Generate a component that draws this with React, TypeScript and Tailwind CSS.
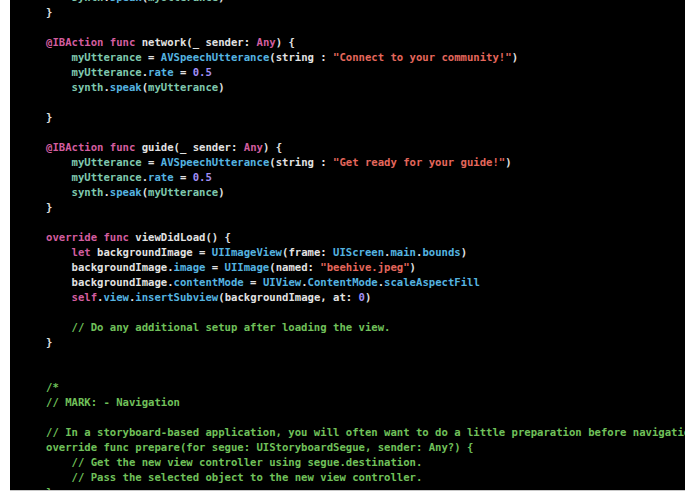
import React from "react";

type Seg = [string, string];

// token colours, Xcode dark theme as seen in the screenshot
const col: Record<string, string> = {
  p: "text-[#e2e2e2]",
  k: "text-[#d35d9f]",
  t: "text-[#7fc8ae]",
  b: "text-[#55b4e0]",
  n: "text-[#a28ff5]",
  s: "text-[#e4675c]",
  g: "text-[#70c05a]",
};

const I = "    ";

const lines: Seg[][] = [
  [[I, "p"], ["synth", "t"], [".", "p"], ["speak", "b"], ["(", "p"], ["myUtterance", "t"], [")", "p"]],
  [["}", "p"]],
  [],
  [["@IBAction", "k"], [" ", "p"], ["func", "k"], [" network(_ sender: ", "p"], ["Any", "k"], [") {", "p"]],
  [[I, "p"], ["myUtterance", "t"], [" = ", "p"], ["AVSpeechUtterance", "b"], ["(string : ", "p"], ['"Connect to your community!"', "s"], [")", "p"]],
  [[I, "p"], ["myUtterance", "t"], [".", "p"], ["rate", "b"], [" = ", "p"], ["0.5", "n"]],
  [[I, "p"], ["synth", "t"], [".", "p"], ["speak", "b"], ["(", "p"], ["myUtterance", "t"], [")", "p"]],
  [],
  [["}", "p"]],
  [],
  [["@IBAction", "k"], [" ", "p"], ["func", "k"], [" guide(_ sender: ", "p"], ["Any", "k"], [") {", "p"]],
  [[I, "p"], ["myUtterance", "t"], [" = ", "p"], ["AVSpeechUtterance", "b"], ["(string : ", "p"], ['"Get ready for your guide!"', "s"], [")", "p"]],
  [[I, "p"], ["myUtterance", "t"], [".", "p"], ["rate", "b"], [" = ", "p"], ["0.5", "n"]],
  [[I, "p"], ["synth", "t"], [".", "p"], ["speak", "b"], ["(", "p"], ["myUtterance", "t"], [")", "p"]],
  [["}", "p"]],
  [],
  [["override", "k"], [" ", "p"], ["func", "k"], [" viewDidLoad() {", "p"]],
  [[I, "p"], ["let", "k"], [" backgroundImage = ", "p"], ["UIImageView", "b"], ["(frame: ", "p"], ["UIScreen", "b"], [".", "p"], ["main", "b"], [".", "p"], ["bounds", "b"], [")", "p"]],
  [[I + "backgroundImage.", "p"], ["image", "b"], [" = ", "p"], ["UIImage", "b"], ["(named: ", "p"], ['"beehive.jpeg"', "s"], [")", "p"]],
  [[I + "backgroundImage.", "p"], ["contentMode", "b"], [" = ", "p"], ["UIView", "b"], [".", "p"], ["ContentMode", "b"], [".", "p"], ["scaleAspectFill", "b"]],
  [[I, "p"], ["self", "k"], [".", "p"], ["view", "b"], [".", "p"], ["insertSubview", "b"], ["(backgroundImage, at: ", "p"], ["0", "n"], [")", "p"]],
  [],
  [[I + "// Do any additional setup after loading the view.", "g"]],
  [["}", "p"]],
  [],
  [],
  [["/*", "g"]],
  [["// MARK: - Navigation", "g"]],
  [],
  [["// In a storyboard-based application, you will often want to do a little preparation before navigation", "g"]],
  [["override func prepare(for segue: UIStoryboardSegue, sender: Any?) {", "g"]],
  [[I + "// Get the new view controller using segue.destination.", "g"]],
  [[I + "// Pass the selected object to the new view controller.", "g"]],
  [["}", "g"]],
];

const App = () => {
  return (
    <div className="w-[695px] h-[494px] bg-white flex overflow-hidden">
      <div className="ml-[10px] w-[675px] h-[491px] bg-black border-b border-[#c9c9c9] overflow-hidden">
        <div
          className="-mt-[10px] pl-[36px] text-[10.6px] leading-[15px] font-bold whitespace-pre"
          style={{ fontFamily: '"DejaVu Sans Mono", "Liberation Mono", monospace' }}
        >
          {lines.map((line, i) => (
            <div key={i} className="h-[15px]">
              {line.map(([text, c], j) => (
                <span key={j} className={col[c]}>
                  {text}
                </span>
              ))}
            </div>
          ))}
        </div>
      </div>
    </div>
  );
};

export default App;
